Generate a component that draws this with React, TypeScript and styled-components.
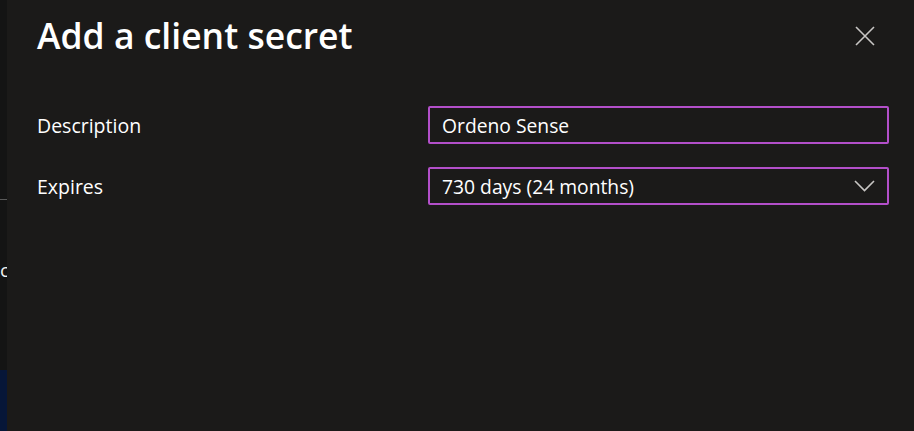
import React from "react";
import styled, { createGlobalStyle } from "styled-components";

const Global = createGlobalStyle`
  html, body { margin: 0; padding: 0; background: #1b1a19; }
  body { font-family: "Open Sans", "Noto Sans", "Liberation Sans", sans-serif; }
  #root { width: 914px; height: 431px; overflow: hidden; }
`;

const Page = styled.div`
  display: flex;
  width: 914px;
  height: 431px;
`;

const Backdrop = styled.div`
  width: 7px;
  flex: none;
  background: #141414;
  display: flex;
  flex-direction: column;
  overflow: hidden;
`;

const BackdropRule = styled.div<{ $top: number }>`
  margin-top: ${(p) => p.$top}px;
  height: 1px;
  background: #5a5a5a;
`;

const BackdropText = styled.div<{ $top: number }>`
  margin-top: ${(p) => p.$top}px;
  font-size: 19px;
  line-height: 18px;
  color: #f0f0f0;
  white-space: nowrap;
  display: flex;
  justify-content: flex-end;
  direction: rtl;
`;

const BackdropBlock = styled.div<{ $top: number }>`
  margin-top: ${(p) => p.$top}px;
  flex: 1;
  background: #061638;
`;

const Panel = styled.div`
  flex: 1;
  background: #1b1a19;
  padding: 14px 25px 0 30px;
  display: flex;
  flex-direction: column;
  color: #ffffff;
`;

const Header = styled.div`
  display: flex;
  align-items: flex-start;
  justify-content: space-between;
`;

const Title = styled.h1`
  margin: 0;
  font-size: 35.5px;
  font-weight: 600;
  line-height: 42px;
  color: #ffffff;
`;

const CloseButton = styled.button`
  margin: 12px 14px 0 0;
  padding: 0;
  width: 20px;
  height: 20px;
  border: none;
  background: transparent;
  display: flex;
  cursor: pointer;
`;

const Form = styled.div`
  margin-top: 50px;
  display: grid;
  grid-template-columns: 391px 1fr;
  row-gap: 23px;
  align-items: center;
`;

const Label = styled.label`
  font-size: 19.5px;
  color: #ffffff;
`;

const Field = styled.div`
  box-sizing: border-box;
  height: 38px;
  border: 2px solid #b34fc9;
  border-radius: 2px;
  background: #1b1a19;
  display: flex;
  align-items: center;
  justify-content: space-between;
  padding: 0 12px 0 12px;
  font-size: 19.3px;
  color: #ffffff;
`;

const Chevron = styled.svg`
  width: 21px;
  height: 12px;
`;

export default function App() {
  return (
    <>
      <Global />
      <Page>
        <Backdrop>
          <BackdropRule $top={199} />
          <BackdropText $top={61}>c</BackdropText>
          <BackdropBlock $top={91} />
        </Backdrop>
        <Panel>
          <Header>
            <Title>Add a client secret</Title>
            <CloseButton aria-label="Close">
              <svg width="20" height="20" viewBox="0 0 20 20">
                <path d="M1 1 L19 19 M19 1 L1 19" stroke="#c8c6c4" strokeWidth="1.6" fill="none" />
              </svg>
            </CloseButton>
          </Header>
          <Form>
            <Label>Description</Label>
            <Field>Ordeno Sense</Field>
            <Label>Expires</Label>
            <Field>
              <span>730 days (24 months)</span>
              <Chevron viewBox="0 0 21 12">
                <path d="M1 1 L10.5 10.5 L20 1" stroke="#c8c6c4" strokeWidth="1.6" fill="none" />
              </Chevron>
            </Field>
          </Form>
        </Panel>
      </Page>
    </>
  );
}
